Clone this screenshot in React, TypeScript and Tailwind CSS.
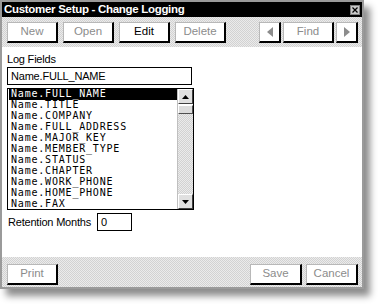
import React from "react";

const ui = { fontFamily: '"Liberation Sans", Arial, sans-serif', letterSpacing: "-0.2px" };
const mono = { fontFamily: '"DejaVu Sans Mono", "Liberation Mono", monospace' };

function Btn({ label, w, enabled = false }: { label: string; w: string; enabled?: boolean }) {
  return (
    <div
      className={`${w} h-[21px] bg-white border-t border-l border-t-[#b8b8b8] border-l-[#b8b8b8] border-r-2 border-b-2 border-r-black border-b-black flex items-center justify-center text-[11.5px] ${enabled ? "text-black" : "text-[#8c8c8c]"}`}
      style={{ fontFamily: '"Liberation Sans", Arial, sans-serif' }}
    >
      {label}
    </div>
  );
}

function ArrowBtn({ dir }: { dir: "left" | "right" }) {
  return (
    <div className="w-[22px] h-[21px] bg-white border-t border-l border-t-[#b8b8b8] border-l-[#b8b8b8] border-r-2 border-b-2 border-r-black border-b-black flex items-center justify-center">
      <svg width="6" height="10" viewBox="0 0 6 10">
        {dir === "left" ? <polygon points="6,0 6,10 0,5" fill="#8c8c8c" /> : <polygon points="0,0 0,10 6,5" fill="#8c8c8c" />}
      </svg>
    </div>
  );
}

const dither =
  "bg-[repeating-conic-gradient(#d2d2d2_0_25%,#ebebeb_0_50%)] bg-[length:2px_2px]";

const items = [
  "Name.FULL_NAME",
  "Name.TITLE",
  "Name.COMPANY",
  "Name.FULL_ADDRESS",
  "Name.MAJOR_KEY",
  "Name.MEMBER_TYPE",
  "Name.STATUS",
  "Name.CHAPTER",
  "Name.WORK_PHONE",
  "Name.HOME_PHONE",
  "Name.FAX",
];

export default function App() {
  return (
    <div className="w-[380px] h-[306px] bg-white overflow-hidden">
      <div className="w-[364px] h-[289px] border-2 border-[#9a9a9a] bg-[#dedede] flex flex-col shadow-[6px_7px_7px_rgba(0,0,0,0.45)]">
        {/* Title bar */}
        <div className="h-[15px] bg-black flex items-center justify-between pl-[2px] pr-[1px] shrink-0">
          <span
            className="text-white font-bold text-[11.5px] leading-none"
            style={{ fontFamily: '"Liberation Sans", Arial, sans-serif', letterSpacing: "-0.3px" }}
          >
            Customer Setup - Change Logging
          </span>
          <div className="w-[10px] h-[10px] bg-[#c8c8c8] border border-[#808080] flex items-center justify-center mr-[1px]">
            <svg width="6" height="6" viewBox="0 0 6 6">
              <path d="M0.5 0.5L5.5 5.5M5.5 0.5L0.5 5.5" stroke="#000" strokeWidth="1.2" />
            </svg>
          </div>
        </div>
        {/* Toolbar */}
        <div className={`h-[30px] shrink-0 flex items-start pt-[5px] pl-[5px] pr-[4px] ${dither}`}>
          <div className="flex gap-[5px]">
            <Btn label="New" w="w-[51px]" />
            <Btn label="Open" w="w-[51px]" />
            <Btn label="Edit" w="w-[51px]" enabled />
            <Btn label="Delete" w="w-[51px]" />
          </div>
          <div className="ml-auto flex gap-[2px]">
            <ArrowBtn dir="left" />
            <Btn label="Find" w="w-[51px]" />
            <ArrowBtn dir="right" />
          </div>
        </div>
        {/* Content */}
        <div className="h-[210px] shrink-0 bg-white pl-[5px] pt-[5px] flex flex-col" style={ui}>
          <div className="text-[11px] leading-[14px] text-black">Log Fields</div>
          <div className="w-[185px] h-[18px] mt-[1px] border border-black flex items-center pl-[3px] text-[11px] text-black">
            Name.FULL_NAME
          </div>
          <div className="w-[187px] h-[122px] mt-[3px] border border-black flex overflow-hidden">
            <div className="flex-1 pl-[1px] overflow-hidden">
              {items.map((it, i) => (
                <div
                  key={it}
                  className={`h-[11px] leading-[9px] pl-[2px] text-[10px] whitespace-nowrap ${i === 0 ? "bg-black text-white" : "text-black"}`}
                  style={{ ...mono, letterSpacing: "0.8px" }}
                >
                  {it}
                </div>
              ))}
            </div>
            <div className="w-[16px] flex flex-col border-l border-[#c0c0c0]">
              <div className="h-[15px] bg-[#e0e0e0] border border-t-white border-l-white border-r-[#404040] border-b-[#404040] flex items-center justify-center">
                <svg width="7" height="4" viewBox="0 0 7 4"><polygon points="0,4 7,4 3.5,0" fill="#000" /></svg>
              </div>
              <div className="h-[9px] mt-[1px] bg-[#dcdcdc] border border-t-white border-l-white border-r-[#505050] border-b-[#505050]" />
              <div className={`flex-1 ${dither}`} />
              <div className="h-[15px] bg-[#e0e0e0] border border-t-white border-l-white border-r-[#404040] border-b-[#404040] flex items-center justify-center">
                <svg width="7" height="4" viewBox="0 0 7 4"><polygon points="0,0 7,0 3.5,4" fill="#000" /></svg>
              </div>
            </div>
          </div>
          <div className="flex items-center mt-[3px]">
            <span className="text-[11px] text-black ml-[1px] mr-[6px]">Retention Months</span>
            <div className="w-[35px] h-[18px] border border-black flex items-center pl-[3px] text-[11px] text-black">0</div>
          </div>
        </div>
        {/* Bottom bar */}
        <div className={`flex-1 flex items-start pt-[7px] pl-[5px] pr-[4px] ${dither}`}>
          <Btn label="Print" w="w-[51px]" />
          <div className="ml-auto flex gap-[4px]">
            <Btn label="Save" w="w-[52px]" />
            <Btn label="Cancel" w="w-[52px]" />
          </div>
        </div>
      </div>
    </div>
  );
}
